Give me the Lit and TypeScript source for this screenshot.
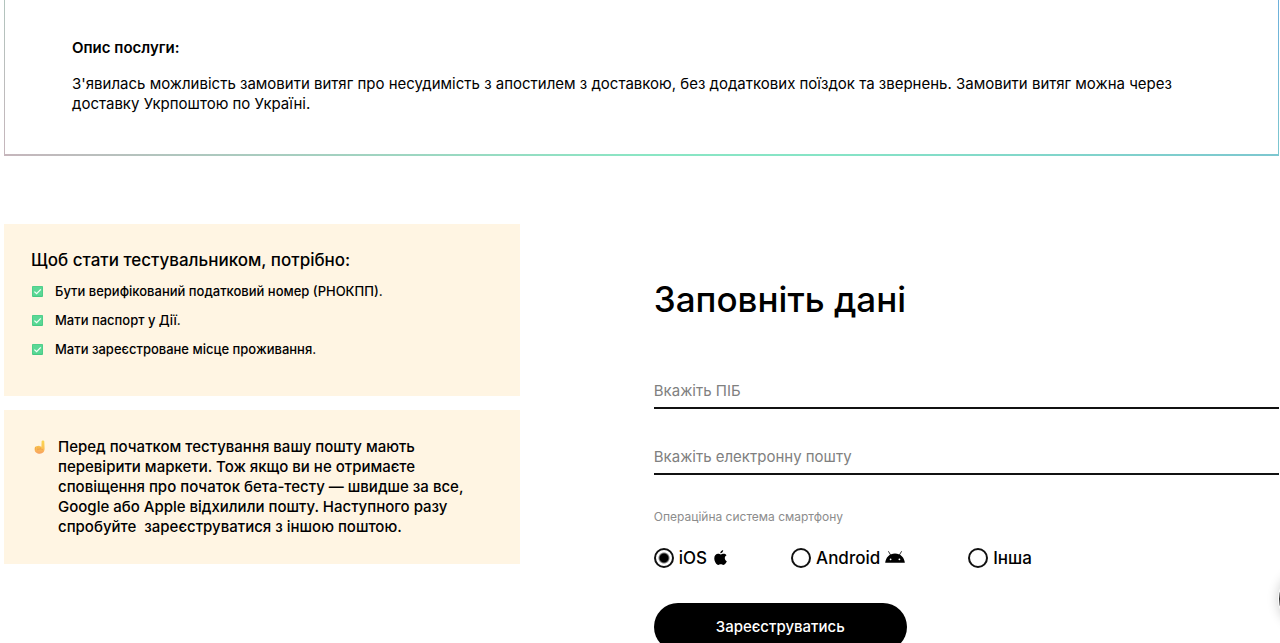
import { LitElement, html, css, svg } from "lit";
import { customElement, state } from "lit/decorators.js";

const requirements = [
  "Бути верифікований податковий номер (РНОКПП).",
  "Мати паспорт у Дії.",
  "Мати зареєстроване місце проживання.",
];

const checkIcon = svg`<svg class="tick" viewBox="0 0 11 11" aria-hidden="true">
  <rect width="11" height="11" rx="1" fill="#45c983"></rect>
  <rect x="0.6" y="0.6" width="9.8" height="9.2" rx="0.6" fill="#5bd896"></rect>
  <path d="M2.4 5.6 4.6 7.7 8.8 3.4" fill="none" stroke="#f4fff8" stroke-width="1.3"></path>
</svg>`;

const handIcon = svg`<svg class="hand" viewBox="0 0 12 14" aria-hidden="true">
  <defs><linearGradient id="skin" x1="0" y1="0" x2="0" y2="1">
    <stop offset="0" stop-color="#fbd650"></stop><stop offset="0.55" stop-color="#fcc353"></stop><stop offset="1" stop-color="#f79f60"></stop>
  </linearGradient></defs>
  <path d="M7.600 1.400C7.600.2 10.200.2 10.300 1.400L10.600 8.600C10.700 11.600 8.900 13.700 5.900 13.700 2.800 13.700.6 12 .6 9.200.6 8 .8 7 1.700 6.800 2.200 6 3.200 5.800 3.900 6.300 4.600 5.600 5.600 5.700 6.100 6.400L7.400 6.700Z" fill="url(#skin)"></path>
  <path d="M1.7 7.2V9.4M3.9 6.8V9M6.1 6.8V8.6M3.4 9.8C5 8.800 7 8.600 8.600 9.600" fill="none" stroke="#e9953f" stroke-width="0.6" stroke-linecap="round"></path>
</svg>`;

const appleIcon = svg`<svg class="apple" viewBox="0 0 12 14" aria-hidden="true">
  <path d="M8.5 0C8.6 1.7 7.3 3.1 5.8 3.1 5.6 1.6 7 .2 8.5 0ZM10 7.4C10 6 11 5.2 11.6 4.8 10.9 3.8 9.8 3.5 9 3.5 7.8 3.5 7 4.1 6.3 4.1 5.6 4.1 4.7 3.5 3.7 3.5 1.9 3.5.2 5 .2 7.7.2 10.800 2.200 13.900 3.900 13.900 4.800 13.900 5.200 13.300 6.300 13.300 7.400 13.300 7.700 13.900 8.600 13.900 10.200 13.900 11.500 11.500 11.900 10.400 10.800 9.900 10 8.900 10 7.400Z"></path>
</svg>`;

const androidIcon = svg`<svg class="android" viewBox="0 0 20 12" aria-hidden="true">
  <path d="M3.600.6 5.600 4M16.400.6 14.400 4" stroke="#000" stroke-width="0.8" stroke-linecap="round"></path>
  <path d="M.2 11.800C.6 6.500 4.500 2.400 10 2.400S19.400 6.500 19.800 11.800Z"></path>
  <circle cx="5.600" cy="8.300" r="0.9" fill="#fff"></circle><circle cx="14.400" cy="8.300" r="0.9" fill="#fff"></circle>
</svg>`;

const platforms = [
  { id: "ios", label: "iOS", icon: appleIcon },
  { id: "android", label: "Android", icon: androidIcon },
  { id: "other", label: "Інша", icon: null },
];

@customElement("app-root")
export class AppRoot extends LitElement {
  @state() private platform = "ios";

  static styles = css`
    :host {
      display: block;
      height: 100vh;
      overflow: hidden;
      background: #fff;
      color: #000;
      font-family: Inter, "Noto Sans", sans-serif;
      font-size: 15px;
      line-height: 20px;
    }
    * { box-sizing: border-box; }
    h1, h2, p, ul, fieldset { margin: 0; padding: 0; border: 0; }
    main { padding: 0 1px 0 4px; }
    .about {
      padding: 38px 67px 40px;
      border: 1px solid;
      border-width: 0 1px 2px 1px;
      border-image: linear-gradient(45deg, #c6b6bc, #b0c6be 12%, #8ae6c4 45%, #86e4c6 58%, #7cc6d0 90%, #6cb0dc) 1;
    }
    .about h2 { font-size: 15px; font-weight: 600; margin-bottom: 16px; }
    .columns {
      display: grid;
      grid-template-columns: minmax(0, 33fr) minmax(0, 40fr);
      column-gap: 134px;
      margin-top: 68px;
    }
    .notes { display: flex; flex-direction: column; gap: 14px; }
    .card { background: #fff5e3; padding: 27px; }
    .requirements { padding-top: 26px; padding-bottom: 37px; }
    .requirements h2 { font-size: 17px; font-weight: 500; margin-bottom: 11px; }
    .requirements ul { list-style: none; display: grid; gap: 9px; }
    .requirements li { display: flex; align-items: center; gap: 12px; padding-left: 1px; font-size: 13px; font-weight: 500; }
    .tick { width: 11px; height: 11px; flex: none; }
    .warning { display: flex; gap: 12px; padding-left: 30px; font-weight: 500; }
    .warning p { white-space: pre-wrap; max-width: 420px; }
    .hand { width: 12px; height: 14px; flex: none; margin-top: 3px; }
    form { padding-top: 55px; }
    form h1 { font-size: 35px; font-weight: 500; line-height: 40px; margin-bottom: 56px; }
    .field { margin-bottom: 32px; }
    .field input {
      display: block; width: 100%; height: 34px; padding: 0 0 1px;
      border: 0; border-bottom: 2px solid #111; border-radius: 0; outline: 0;
      background: none; font: inherit; color: #000;
    }
    .field input::placeholder { color: #808080; opacity: 1; }
    legend { padding: 0; font-size: 12px; color: #8c8c8c; margin: 1px 0 21px; }
    .options { display: flex; gap: 63px; }
    .options label { display: flex; align-items: center; gap: 5px; font-size: 17px; font-weight: 500; }
    .options input {
      appearance: none; width: 20px; height: 20px; margin: 0; flex: none;
      border: 2px solid #111; border-radius: 50%; background: #fff;
    }
    .options input:checked { background: radial-gradient(circle, #000 4px, #fff 6px); }
    .apple { width: 13px; height: 15px; margin: 0 1px 2px 2px; }
    .android { width: 20px; height: 12px; margin-bottom: 2px; }
    .submit {
      display: block; margin-top: 35px; padding: 0 62px; height: 48px;
      border: 0; border-radius: 24px; background: #000; color: #fff;
      font: inherit; font-weight: 500;
    }
    .chat {
      position: fixed; right: -58px; bottom: 14px; width: 60px; height: 60px; padding: 0;
      border: 0; border-radius: 50%; background: #fff; box-shadow: 0 0 12px rgba(0, 0, 0, 0.2);
    }
    .chat::before {
      content: ""; position: absolute; inset: 1px; border: 3px solid #333; border-radius: 50%;
    }
  `;

  render() {
    return html`
      <main>
        <section class="about">
          <h2>Опис послуги:</h2>
          <p>З'явилась можливість замовити витяг про несудимість з апостилем з доставкою, без додаткових поїздок та звернень. Замовити витяг можна через доставку Укрпоштою по Україні.</p>
        </section>
        <div class="columns">
          <div class="notes">
            <section class="card requirements">
              <h2>Щоб стати тестувальником, потрібно:</h2>
              <ul>${requirements.map((r) => html`<li>${checkIcon}<span>${r}</span></li>`)}</ul>
            </section>
            <section class="card warning">
              ${handIcon}
              <p>Перед початком тестування вашу пошту мають перевірити маркети. Тож якщо ви не отримаєте сповіщення про початок бета-тесту — швидше за все, Google або Apple відхилили пошту. Наступного разу спробуйте  зареєструватися з іншою поштою.</p>
            </section>
          </div>
          <form @submit=${(e: Event) => e.preventDefault()}>
            <h1>Заповніть дані</h1>
            <div class="field"><input id="name" type="text" aria-label="Вкажіть ПІБ" placeholder="Вкажіть ПІБ"></div>
            <div class="field"><input id="email" type="email" aria-label="Вкажіть електронну пошту" placeholder="Вкажіть електронну пошту"></div>
            <fieldset>
              <legend>Операційна система смартфону</legend>
              <div class="options">
                ${platforms.map((p) => html`<label>
                  <input type="radio" name="platform" value=${p.id} .checked=${this.platform === p.id}
                    @change=${() => (this.platform = p.id)}>
                  <span>${p.label}</span>${p.icon}
                </label>`)}
              </div>
            </fieldset>
            <button class="submit" type="submit">Зареєструватись</button>
          </form>
        </div>
      </main>
      <button class="chat" type="button" aria-label="Чат"></button>
    `;
  }
}
